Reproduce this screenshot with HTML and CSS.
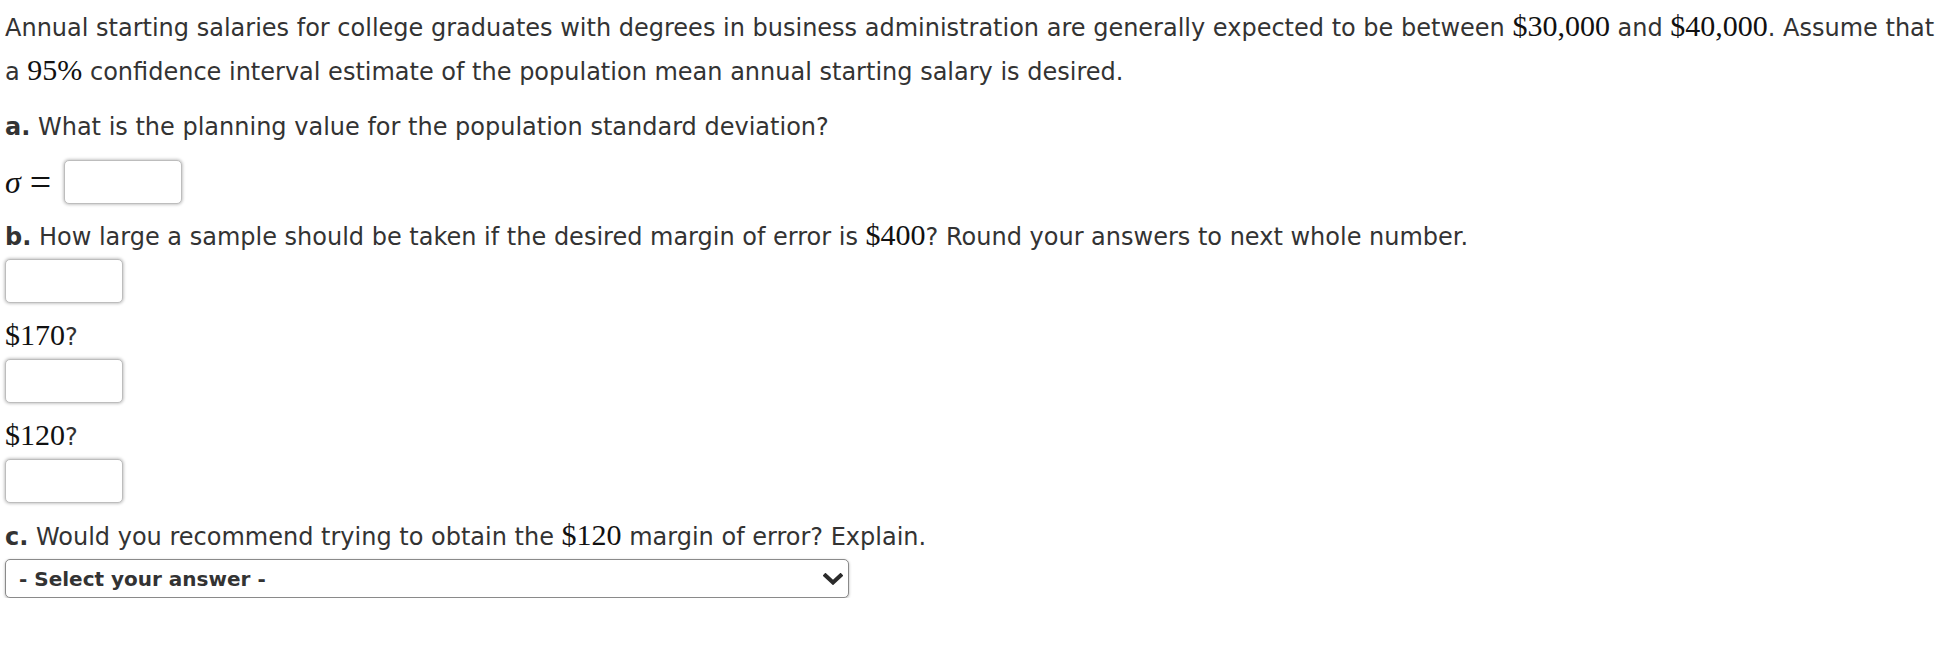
FILE: index.html
```html
<!DOCTYPE html>
<html>
<head>
<meta charset="utf-8">
<link rel="stylesheet" href="styles.css">
</head>
<body>
<div class="question">
  <p class="intro">Annual starting salaries for college graduates with degrees in business administration are generally expected to be between <span class="m">$30,000</span> and <span class="m">$40,000</span>. Assume that a <span class="m">95%</span> confidence interval estimate of the population mean annual starting salary is desired.</p>

  <p class="line gap"><b>a.</b> What is the planning value for the population standard deviation?</p>
  <div class="sigma-row gap">
    <span class="m sigma"><i>σ</i></span><span class="m eq">=</span>
    <input class="answer" type="text">
  </div>

  <p class="line"><b>b.</b> How large a sample should be taken if the desired margin of error is <span class="m">$400</span>? Round your answers to next whole number.</p>
  <input class="answer block gap" type="text">

  <p class="line"><span class="m">$170</span>?</p>
  <input class="answer block gap" type="text">

  <p class="line"><span class="m">$120</span>?</p>
  <input class="answer block gap" type="text">

  <p class="line"><b>c.</b> Would you recommend trying to obtain the <span class="m">$120</span> margin of error? Explain.</p>
  <div class="select-wrap">
    <select class="select">
      <option>- Select your answer -</option>
    </select>
    <svg class="chevron" width="20" height="12" viewBox="0 0 20 12"><path d="M2.5 2.5 L10 9.5 L17.5 2.5" fill="none" stroke="#2b2b2b" stroke-width="4" stroke-linecap="square"/></svg>
  </div>
</div>
</body>
</html>
```

FILE: styles.css
```css
html, body {
  margin: 0;
  padding: 0;
  background: #fff;
}
body {
  font-family: "DejaVu Sans", Verdana, sans-serif;
  font-size: 24px;
  color: #333;
}
.question {
  padding: 6px 4px 0 5px;
}
p {
  margin: 0;
}
.intro {
  line-height: 44px;
  margin-bottom: 11px;
}
.line {
  line-height: 44px;
  height: 44px;
  white-space: nowrap;
}
b {
  font-weight: bold;
}
.m {
  font-family: "Liberation Serif", "Times New Roman", serif;
  font-size: 30px;
  line-height: 20px;
  color: #111;
}
.m i {
  font-style: italic;
}
.sigma-row {
  display: flex;
  align-items: center;
  height: 44px;
}
.sigma {
  font-size: 32px;
}
.eq {
  font-size: 38px;
  margin-left: 9px;
  margin-right: 13px;
}
.answer {
  box-sizing: border-box;
  width: 118px;
  height: 44px;
  border: 1px solid #bdbdbd;
  border-radius: 5px;
  background: #fff;
  box-shadow: 0 0 3px 1px rgba(0,0,0,0.22);
  margin: 0;
  padding: 0 6px;
  font: inherit;
}
.answer.block {
  display: block;
}
.gap {
  margin-bottom: 11px;
}
.answer.gap {
  margin-bottom: 12px;
}
.select-wrap {
  position: relative;
  width: 844px;
  height: 39px;
}
.select {
  -webkit-appearance: none;
  appearance: none;
  box-sizing: border-box;
  width: 844px;
  height: 39px;
  border: 1px solid #8a8a8a;
  border-radius: 5px;
  background: #fff;
  box-shadow: 0 1px 3px rgba(0,0,0,0.3);
  font-family: "DejaVu Sans", Verdana, sans-serif;
  font-size: 20px;
  font-weight: bold;
  color: #333;
  padding: 0 0 0 13px;
  margin: 0;
}
.chevron {
  position: absolute;
  right: 6px;
  top: 14px;
  pointer-events: none;
}
```
